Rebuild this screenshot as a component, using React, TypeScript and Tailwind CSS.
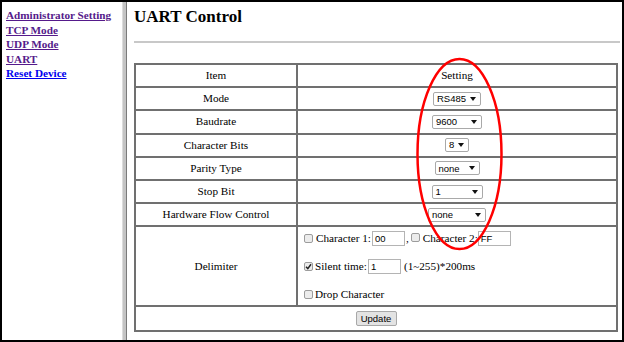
import React from 'react';

const serif = "font-['Liberation_Serif','Times_New_Roman',serif]";
const sans = "font-['Liberation_Sans',Arial,sans-serif]";

const NAV = [
  { label: 'Administrator Setting', color: 'text-[#551a8b]' },
  { label: 'TCP Mode', color: 'text-[#551a8b]' },
  { label: 'UDP Mode', color: 'text-[#551a8b]' },
  { label: 'UART', color: 'text-[#551a8b]' },
  { label: 'Reset Device', color: 'text-[#0000ee]' }
];

const Caret = () => (
  <svg width="6" height="4" viewBox="0 0 6 4" className="shrink-0">
    <path d="M0 0 L6 0 L3 4 Z" fill="#111" />
  </svg>
);

const Select = ({ value, w }: { value: string; w: string }) => (
  <span
    className={`inline-flex items-center justify-between h-[14px] border border-[#a9a9a9] rounded-[2px] bg-white pl-[3px] pr-[4px] text-[9.5px] leading-none text-black ${sans} ${w}`}
  >
    <span>{value}</span>
    <Caret />
  </span>
);

const Check = ({ checked = false }: { checked?: boolean }) => (
  <span className="inline-flex items-center justify-center w-[9px] h-[9px] shrink-0 border border-[#9c9c9c] rounded-[2px] bg-[#ececec]">
    {checked && (
      <svg width="7" height="7" viewBox="0 0 7 7">
        <path d="M1 3.8 L2.8 5.6 L6 1.2" stroke="#222" strokeWidth="1.5" fill="none" />
      </svg>
    )}
  </span>
);

const TextBox = ({ value }: { value: string }) => (
  <span
    className={`inline-flex items-center w-[33px] h-[15px] border border-[#b4b4b4] bg-white pl-[2px] text-[9.5px] leading-none text-black ${sans}`}
  >
    {value}
  </span>
);

const ROWS: { item: string; setting: React.ReactNode }[] = [
  { item: 'Item', setting: <span>Setting</span> },
  { item: 'Mode', setting: <Select value="RS485" w="w-[48px]" /> },
  { item: 'Baudrate', setting: <Select value="9600" w="w-[50px]" /> },
  { item: 'Character Bits', setting: <Select value="8" w="w-[24px]" /> },
  { item: 'Parity Type', setting: <Select value="none" w="w-[45px]" /> },
  { item: 'Stop Bit', setting: <Select value="1" w="w-[51px]" /> },
  { item: 'Hardware Flow Control', setting: <Select value="none" w="w-[58px]" /> }
];

const App: React.FC = () => {
  return (
    <div className={`relative flex w-[624px] h-[342px] bg-white border-2 border-black text-black ${serif}`}>
      {/* Left menu frame */}
      <nav className="w-[120px] pt-[6px] pl-[4px] flex flex-col">
        {NAV.map((n) => (
          <a key={n.label} href="#" className={`text-[11.2px] leading-[14.5px] font-bold underline ${n.color}`}>
            {n.label}
          </a>
        ))}
      </nav>

      {/* Frame splitter */}
      <div className="w-[5px] bg-[#c4c4c4] border-l border-[#dcdcdc] border-r border-r-[#7a7a7a]" />

      {/* Main frame */}
      <main className="flex-1 flex flex-col pl-[7px] pr-[2px]">
        <h2 className="mt-[5px] text-[17px] leading-[20px] font-bold">UART Control</h2>
        <div className="mt-[14px] h-[2px] bg-[#c8c8c8]" />

        <div className="mt-[20px] w-[484px] border-2 border-[#707070] grid grid-cols-[162px_1fr] text-[11.2px] leading-none">
          {ROWS.map((r) => (
            <React.Fragment key={r.item}>
              <div className="h-[23.2px] border-b-2 border-r-2 border-[#707070] flex items-center justify-center">
                {r.item}
              </div>
              <div className="h-[23.2px] border-b-2 border-[#707070] flex items-center justify-center">
                {r.setting}
              </div>
            </React.Fragment>
          ))}

          {/* Delimiter row */}
          <div className="h-[80px] border-b-2 border-r-2 border-[#707070] flex items-center justify-center">
            Delimiter
          </div>
          <div className="h-[80px] border-b-2 border-[#707070] flex flex-col gap-[13px] pt-[4px] pl-[6px]">
            <div className="h-[15px] flex items-center">
              <Check />
              <span className="ml-[3px] mr-[1px]">Character 1:</span>
              <TextBox value="00" />
              <span className="ml-[1px]">,</span>
              <span className="ml-[2px]"><Check /></span>
              <span className="ml-[3px]">Character 2:</span>
              <TextBox value="FF" />
            </div>
            <div className="h-[15px] flex items-center">
              <Check checked />
              <span className="ml-[2px] mr-[1px]">Silent time:</span>
              <TextBox value="1" />
              <span className="ml-[3px]">(1~255)*200ms</span>
            </div>
            <div className="h-[15px] flex items-center">
              <Check />
              <span className="ml-[2px]">Drop Character</span>
            </div>
          </div>

          {/* Update row */}
          <div className="col-span-2 h-[23px] flex items-center justify-center">
            <button
              className={`w-[41px] h-[15px] bg-[#e3e3e3] border border-[#a8a8a8] rounded-[2px] text-[9.5px] leading-none ${sans}`}
            >
              Update
            </button>
          </div>
        </div>
      </main>

      {/* Red annotation ellipse */}
      <svg className="absolute left-0 top-0 pointer-events-none" width="624" height="342">
        <ellipse cx="457.5" cy="152" rx="42" ry="95" fill="none" stroke="#ff0000" strokeWidth="2.5" />
      </svg>
    </div>
  );
};

export default App;
